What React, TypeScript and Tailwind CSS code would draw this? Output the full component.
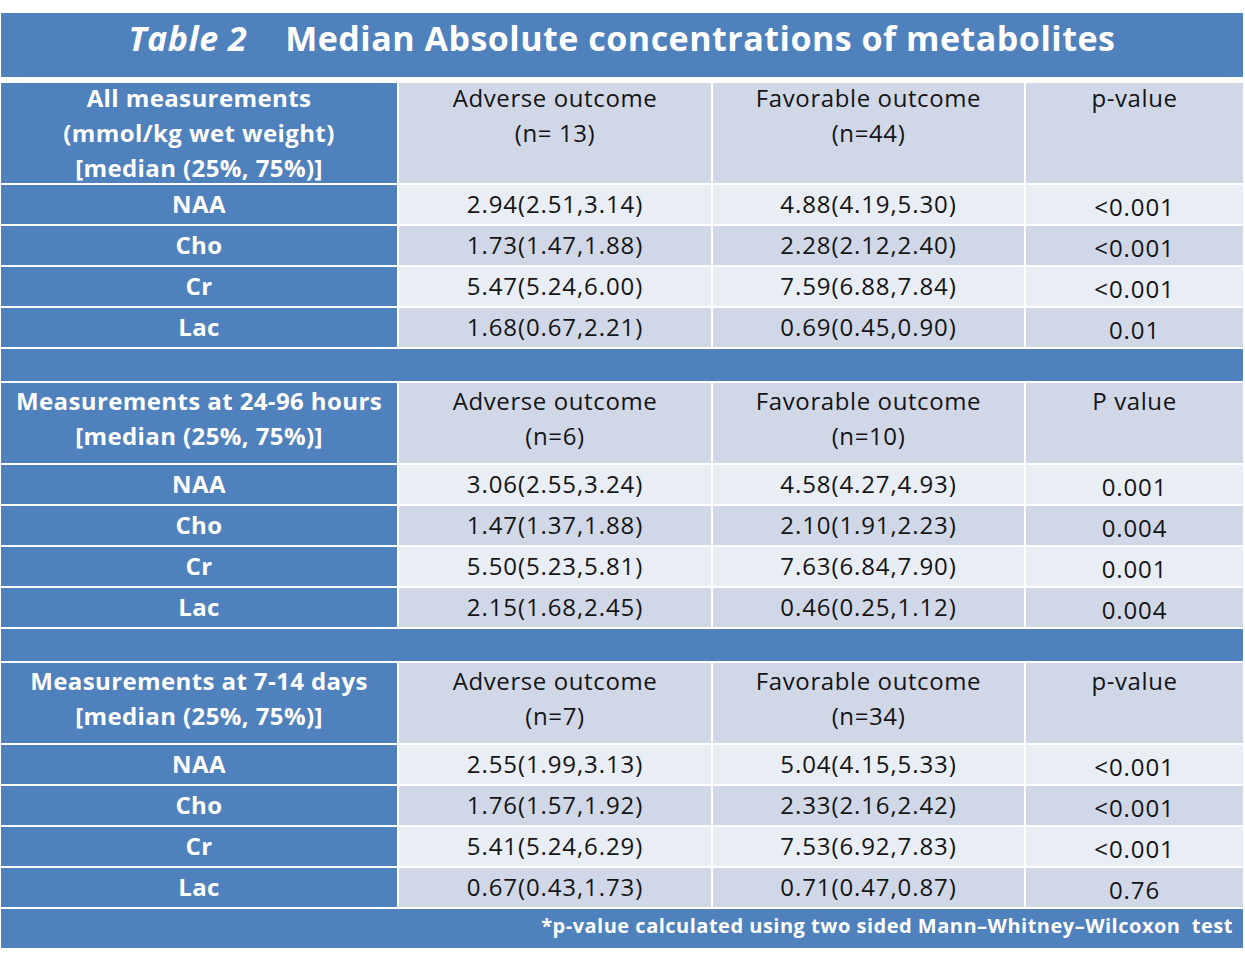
import React from "react";

type Row = [string, string, string, string];
type Section = {
  head: string[];
  adverse: string;
  favorable: string;
  p: string;
  rows: Row[];
  headH: string;
  shift: string;
};

const sections: Section[] = [
  {
    head: ["All measurements", "(mmol/kg wet weight)", "[median (25%, 75%)]"],
    adverse: "(n= 13)",
    favorable: "(n=44)",
    p: "p-value",
    headH: "h-[100px]",
    shift: "relative -top-[3px]",
    rows: [
      ["NAA", "2.94(2.51,3.14)", "4.88(4.19,5.30)", "<0.001"],
      ["Cho", "1.73(1.47,1.88)", "2.28(2.12,2.40)", "<0.001"],
      ["Cr", "5.47(5.24,6.00)", "7.59(6.88,7.84)", "<0.001"],
      ["Lac", "1.68(0.67,2.21)", "0.69(0.45,0.90)", "0.01"],
    ],
  },
  {
    head: ["Measurements at 24-96 hours", "[median (25%, 75%)]"],
    adverse: "(n=6)",
    favorable: "(n=10)",
    p: "P value",
    headH: "h-[80px]",
    shift: "",
    rows: [
      ["NAA", "3.06(2.55,3.24)", "4.58(4.27,4.93)", "0.001"],
      ["Cho", "1.47(1.37,1.88)", "2.10(1.91,2.23)", "0.004"],
      ["Cr", "5.50(5.23,5.81)", "7.63(6.84,7.90)", "0.001"],
      ["Lac", "2.15(1.68,2.45)", "0.46(0.25,1.12)", "0.004"],
    ],
  },
  {
    head: ["Measurements at 7-14 days", "[median (25%, 75%)]"],
    adverse: "(n=7)",
    favorable: "(n=34)",
    p: "p-value",
    headH: "h-[80px]",
    shift: "",
    rows: [
      ["NAA", "2.55(1.99,3.13)", "5.04(4.15,5.33)", "<0.001"],
      ["Cho", "1.76(1.57,1.92)", "2.33(2.16,2.42)", "<0.001"],
      ["Cr", "5.41(5.24,6.29)", "7.53(6.92,7.83)", "<0.001"],
      ["Lac", "0.67(0.43,1.73)", "0.71(0.47,0.87)", "0.76"],
    ],
  },
];

export default function App() {
  return (
    <div
      className="bg-white w-[1245px] h-[956px] pt-[13px] pl-[1px] text-[#141414]"
      style={{ fontFamily: '"Open Sans", "Noto Sans", sans-serif' }}
    >
      <div className="w-[1242px] h-[64px] bg-[#4f81bd] flex justify-center pt-[4px] text-white font-bold text-[34px] leading-[42px] tracking-[0.5px]">
        <span className="italic mr-[38px]">Table 2</span>
        <span>Median Absolute concentrations of metabolites</span>
      </div>
      <div className="mt-[6px] w-[1242px] grid grid-cols-[396px_312px_311px_217px] gap-[2px] bg-white text-[24px] leading-[35px] tracking-[0.9px]">
        {sections.map((s, si) => (
          <React.Fragment key={si}>
            <div className={`${s.headH} bg-[#4f81bd] text-white font-bold text-center tracking-[0.4px]`}>
              <div className={s.shift}>
                {s.head.map((h, i) => (
                  <div key={i}>{h}</div>
                ))}
              </div>
            </div>
            <div className={`${s.headH} bg-[#d0d8e8] text-center tracking-[0.6px]`}>
              <div className={s.shift}>
                <div>Adverse outcome</div>
                <div>{s.adverse}</div>
              </div>
            </div>
            <div className={`${s.headH} bg-[#d0d8e8] text-center tracking-[0.6px]`}>
              <div className={s.shift}>
                <div>Favorable outcome</div>
                <div>{s.favorable}</div>
              </div>
            </div>
            <div className={`${s.headH} bg-[#d0d8e8] text-center tracking-[0.6px]`}>
              <div className={s.shift}>{s.p}</div>
            </div>
            {s.rows.map((r, ri) => {
              const bg = ri % 2 === 0 ? "bg-[#e9edf4]" : "bg-[#d0d8e8]";
              return (
                <React.Fragment key={ri}>
                  <div className="h-[39px] bg-[#4f81bd] text-white font-bold flex items-center justify-center tracking-[0.4px] pb-[3px]">
                    {r[0]}
                  </div>
                  <div className={`h-[39px] ${bg} flex items-center justify-center pb-[3px]`}>{r[1]}</div>
                  <div className={`h-[39px] ${bg} flex items-center justify-center pb-[3px]`}>{r[2]}</div>
                  <div className={`h-[39px] ${bg} flex items-center justify-center pt-[3px]`}>{r[3]}</div>
                </React.Fragment>
              );
            })}
            {si < 2 && <div className="col-span-4 h-[32px] bg-[#4f81bd]" />}
          </React.Fragment>
        ))}
        <div className="col-span-4 h-[39px] bg-[#4f81bd] text-white font-bold text-[20px] leading-[32px] pt-[1px] text-right pr-[10px] tracking-[0.5px]">
          *p-value calculated using two sided Mann–Whitney–Wilcoxon&nbsp; test
        </div>
      </div>
    </div>
  );
}
